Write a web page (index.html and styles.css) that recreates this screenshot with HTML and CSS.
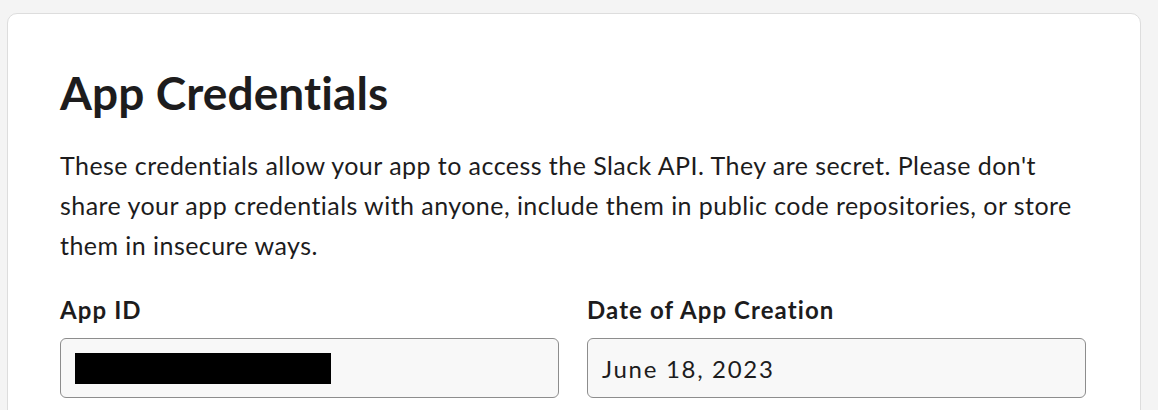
FILE: index.html
```html
<!DOCTYPE html>
<html>
<head>
<meta charset="utf-8">
<link rel="stylesheet" href="styles.css">
</head>
<body>
<div class="card">
  <h1 class="title">App Credentials</h1>
  <p class="desc">These credentials allow your app to access the Slack API. They are secret. Please don't share your app credentials with anyone, include them in public code repositories, or store them in insecure ways.</p>
  <div class="fields">
    <div class="field">
      <label class="label">App ID</label>
      <div class="input"><span class="redacted"></span></div>
    </div>
    <div class="field">
      <label class="label">Date of App Creation</label>
      <div class="input"><span class="value">June 18, 2023</span></div>
    </div>
  </div>
</div>
</body>
</html>
```
FILE: styles.css
```css
html, body {
  margin: 0;
  padding: 0;
  background: #f4f4f4;
  font-family: Lato, "Open Sans", sans-serif;
  color: #1d1c1d;
}
body {
  padding: 13px 17px 0 7px;
  height: 410px;
  box-sizing: border-box;
  overflow: hidden;
}
.card {
  background: #fff;
  border: 1px solid #dddddd;
  border-radius: 10px;
  padding: 51px 54px 40px 52px;
  height: 500px;
  box-sizing: border-box;
}
.title {
  margin: 0;
  font-size: 46px;
  font-weight: 700;
  line-height: 56px;
  letter-spacing: 0.1px;
}
.desc {
  margin: 24px 0 0;
  font-size: 25px;
  line-height: 40px;
  letter-spacing: 0.45px;
  color: #1d1c1d;
}
.fields {
  display: grid;
  grid-template-columns: 1fr 1fr;
  gap: 28px;
  margin-top: 29px;
}
.field {
  display: flex;
  flex-direction: column;
}
.label {
  font-size: 24px;
  font-weight: 700;
  line-height: 32px;
  letter-spacing: 1.1px;
  margin-bottom: 12px;
}
.input {
  height: 60px;
  box-sizing: border-box;
  border: 1px solid #8d8d8d;
  border-radius: 6px;
  background: #f8f8f8;
  display: flex;
  align-items: center;
  padding: 0 14px;
}
.redacted {
  display: block;
  width: 256px;
  height: 31px;
  background: #000;
}
.value {
  font-size: 24px;
  letter-spacing: 1.7px;
  color: #1d1c1d;
}
```
